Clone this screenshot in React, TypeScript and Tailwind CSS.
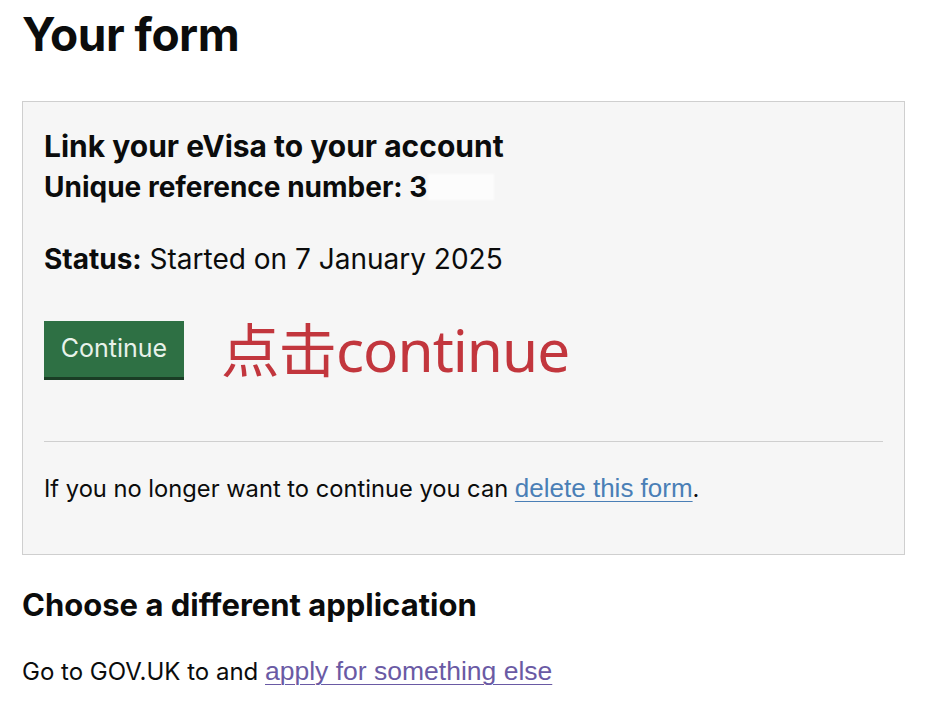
export default function App() {
  return (
    <div className="min-h-[708px] w-[938px] bg-white text-[#0b0c0c] font-['Inter',sans-serif]">
      <div className="pl-[22px] pr-[33px] pt-[6px]">
        <h1 className="text-[46px] font-bold leading-[56px] tracking-[-0.5px]">Your form</h1>

        <div className="mt-[39px] border border-[#cfcfcf] bg-[#f6f6f6] px-[21px] pt-[24px] pb-[49px]">
          <h2 className="text-[30px] font-bold leading-[40px]">Link your eVisa to your account</h2>
          <div className="flex items-center text-[28px] font-bold leading-[42px]">
            <span>Unique reference number: 3</span>
            <span className="ml-[1px] h-[26px] w-[66px] bg-[#fcfcfc] blur-[1px]" />
          </div>

          <p className="mt-[32px] text-[28px] leading-[38px]">
            <span className="font-bold">Status:</span> Started on 7 January 2025
          </p>

          <div className="mt-[39px] flex h-[64px] items-center gap-[37px]">
            <button className="h-[56px] w-[140px] bg-[#2e7044] text-[25px] text-[#e8f2ea] shadow-[0_3px_0_#1a3d25]">
              Continue
            </button>
            <span className="text-[58.5px] leading-[64px] text-[#c2363d] font-['Noto_Sans','Noto_Sans_CJK_SC',sans-serif] tracking-[-1px]">
              点击continue
            </span>
          </div>

          <hr className="mt-[60px] border-t border-[#cfcfcf]" />

          <p className="mt-[30px] text-[23.7px] leading-[32px]">
            If you no longer want to continue you can{' '}
            <a href="#" className="text-[26px] text-[#4a7fb6] underline decoration-1 underline-offset-[4px] font-['Liberation_Sans',sans-serif]">
              delete this form
            </a>
            .
          </p>
        </div>

        <h2 className="mt-[30px] text-[31px] font-bold leading-[40px]">Choose a different application</h2>
        <p className="mt-[30px] text-[24px] leading-[32px]">
          Go to GOV.UK to and{' '}
          <a href="#" className="text-[26.5px] text-[#6a5aa4] underline decoration-1 underline-offset-[4px] font-['Liberation_Sans',sans-serif]">
            apply for something else
          </a>
        </p>
      </div>
    </div>
  );
}
